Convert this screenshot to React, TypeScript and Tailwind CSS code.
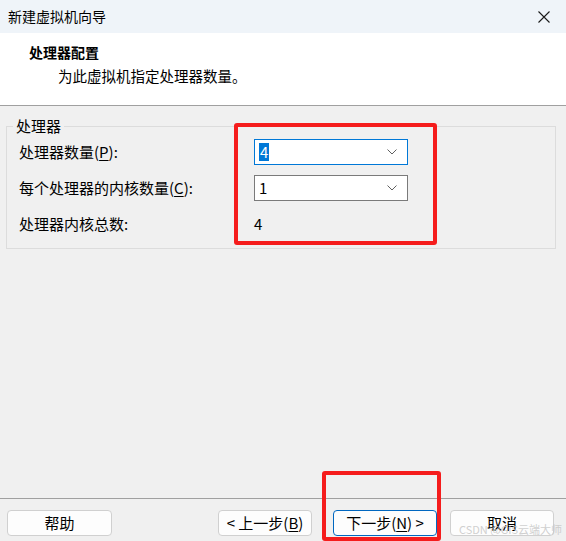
const font = "font-['Microsoft_YaHei_UI','Noto_Sans_CJK_SC',sans-serif]";

function Combo({ value, focused }: { value: string; focused?: boolean }) {
  return (
    <div
      className={`flex h-[26px] w-[154px] items-center justify-between border bg-white pl-[4px] pr-[10px] ${
        focused ? "border-[#0078d7]" : "border-[#7a7a7a]"
      }`}
    >
      {focused ? (
        <span className="bg-[#0078d7] px-[1px] text-[15px] leading-[18px] text-white">{value}</span>
      ) : (
        <span className="text-[15px] leading-[18px] text-black">{value}</span>
      )}
      <svg width="10" height="6" viewBox="0 0 10 6" fill="none">
        <path d="M0.5 0.5 L5 5 L9.5 0.5" stroke="#606060" strokeWidth="1" />
      </svg>
    </div>
  );
}

function WizardButton({ label, primary, className }: { label: React.ReactNode; primary?: boolean; className?: string }) {
  return (
    <button
      type="button"
      className={`flex h-[26px] items-center justify-center rounded-[4px] border bg-[#fdfdfd] text-[15px] text-black ${
        primary ? "border-[#0067c0]" : "border-[#d0d0d0]"
      } ${className ?? ""}`}
    >
      {label}
    </button>
  );
}

export default function App() {
  return (
    <div className={`relative flex h-[541px] w-[566px] flex-col overflow-hidden bg-[#f0f0f0] ${font}`}>
      {/* title bar */}
      <div className="flex h-[33px] items-center justify-between bg-[#eff4f9] pl-[8px] pr-[16px]">
        <span className="text-[14px] text-black">新建虚拟机向导</span>
        <svg width="12" height="12" viewBox="0 0 12 12">
          <path d="M0.5 0.5 L11.5 11.5 M11.5 0.5 L0.5 11.5" stroke="#1a1a1a" strokeWidth="1.1" />
        </svg>
      </div>

      {/* header */}
      <div className="h-[73px] border-b border-[#a0a0a0] bg-white pt-[9px]">
        <p className="pl-[29px] text-[14px] font-bold leading-[20px] text-black">处理器配置</p>
        <p className="mt-[4px] pl-[58px] text-[14.5px] leading-[20px] text-black">为此虚拟机指定处理器数量。</p>
      </div>

      {/* body */}
      <div className="flex-1 pt-[20px]">
        <div className="relative ml-[6px] mr-[10px] border border-[#dcdcdc] pb-[11px] pl-[12px] pt-[12px]">
          <span className="absolute -top-[11px] left-[6px] bg-[#f0f0f0] px-[3px] text-[15px] leading-[20px] text-black">
            处理器
          </span>
          <div className="grid grid-cols-[235px_1fr] gap-y-[10px] text-[15px] text-black">
            <div className="flex h-[26px] items-center">
              处理器数量(<span className="underline underline-offset-2">P</span>):
            </div>
            <Combo value="4" focused />
            <div className="flex h-[26px] items-center">
              每个处理器的内核数量(<span className="underline underline-offset-2">C</span>):
            </div>
            <Combo value="1" />
            <div className="flex h-[26px] items-center">处理器内核总数:</div>
            <div className="flex h-[26px] items-center">4</div>
          </div>
        </div>
      </div>

      {/* footer */}
      <div className="h-[43px] border-t border-[#a0a0a0] pt-[11px]">
        <div className="flex items-center">
          <WizardButton label="帮助" className="ml-[7px] w-[105px]" />
          <WizardButton
            label={
              <>
                &lt;&nbsp;上一步(<span className="underline underline-offset-2">B</span>)
              </>
            }
            className="ml-[106px] w-[94px]"
          />
          <WizardButton
            primary
            label={
              <>
                下一步(<span className="underline underline-offset-2">N</span>) &gt;
              </>
            }
            className="ml-[21px] w-[104px]"
          />
          <WizardButton label="取消" className="ml-[13px] w-[104px]" />
        </div>
      </div>

      {/* annotation overlays */}
      <div className="pointer-events-none absolute left-[234px] top-[123px] h-[122px] w-[203px] rounded-[3px] border-[4px] border-[#f51c1c]" />
      <div className="pointer-events-none absolute left-[322px] top-[471px] h-[70px] w-[119px] rounded-[3px] border-[4px] border-[#f51c1c]" />
      <span className="pointer-events-none absolute left-[459px] top-[522px] whitespace-nowrap text-[11px] leading-[14px] text-[#c4c4c4]/80">
        CSDN @GIS云端大师
      </span>
    </div>
  );
}
